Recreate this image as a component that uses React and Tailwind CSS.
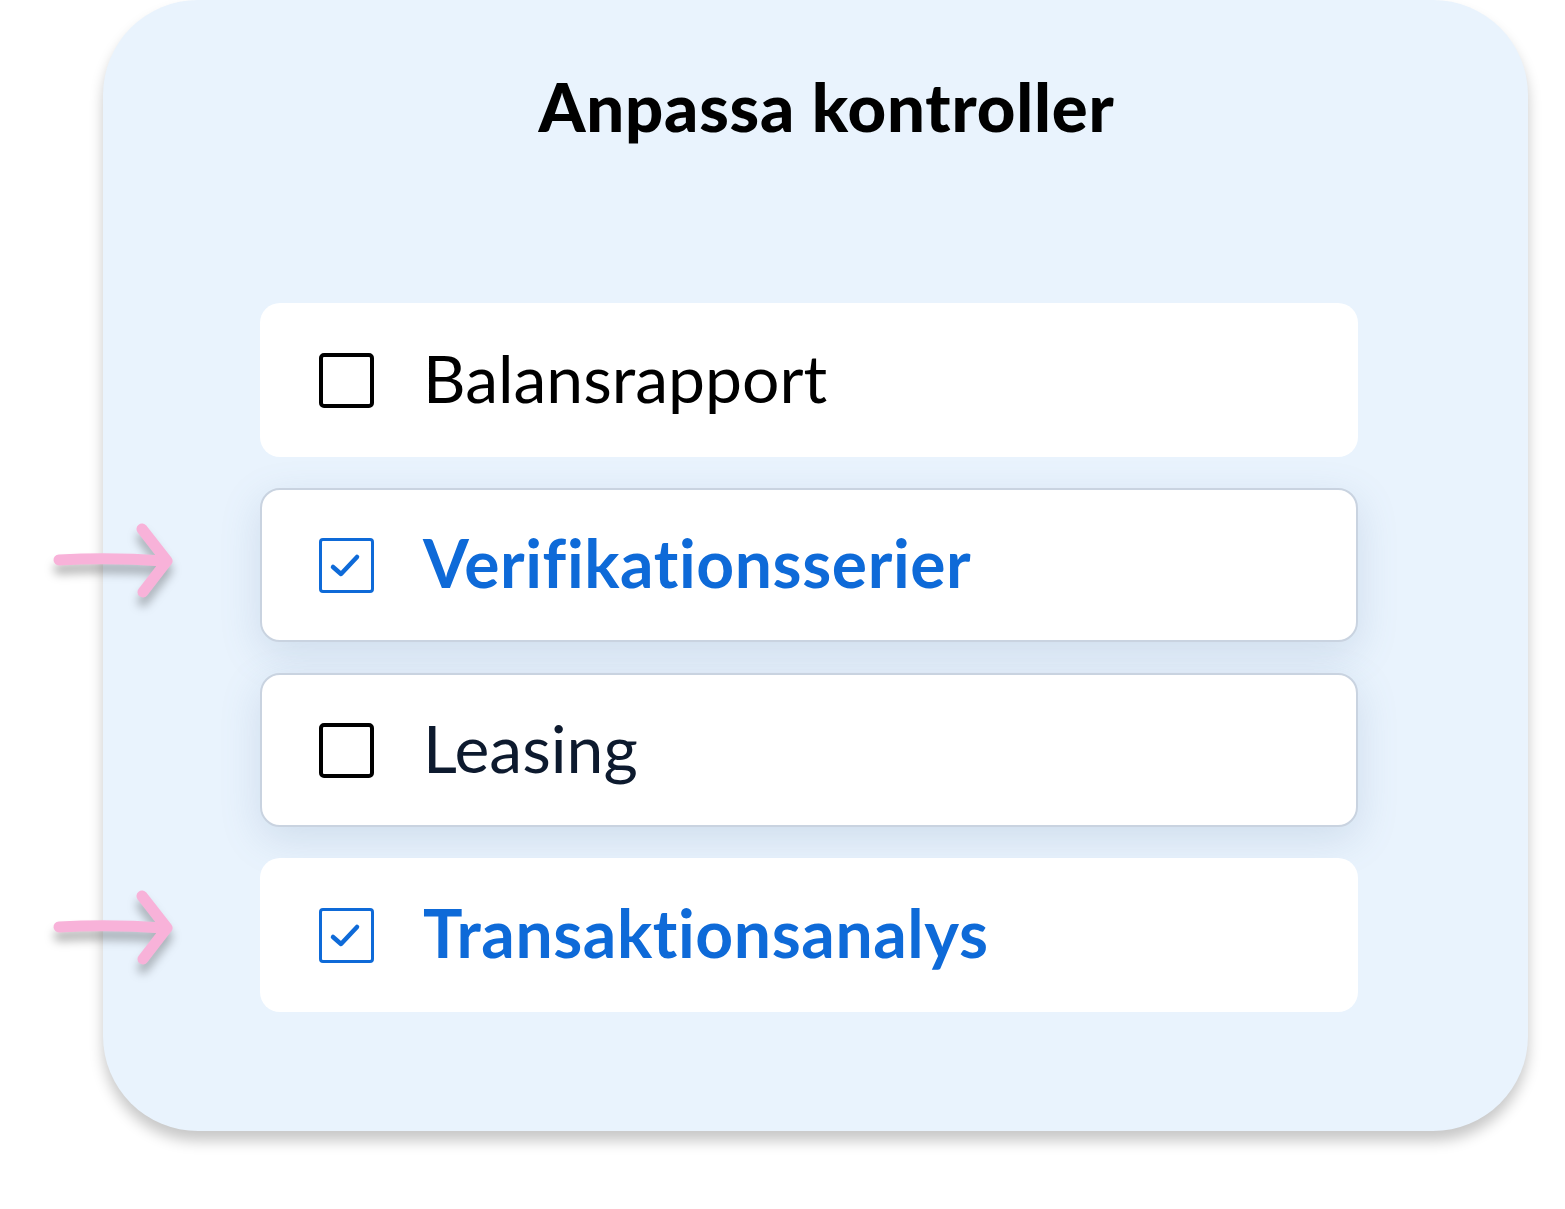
import React from "react";

const items = [
  { label: "Balansrapport", checked: false, outlined: false, tone: "text-black" },
  { label: "Verifikationsserier", checked: true, outlined: true, tone: "text-[#0e6ad8]" },
  { label: "Leasing", checked: false, outlined: true, tone: "text-[#0d1a2e]" },
  { label: "Transaktionsanalys", checked: true, outlined: false, tone: "text-[#0e6ad8]" },
];

const Box = ({ checked }) => {
  if (!checked) {
    return <div className="w-[55px] h-[55px] shrink-0 rounded-[5px] border-[4px] border-black bg-white" />;
  }
  return (
    <div className="w-[55px] h-[55px] shrink-0 rounded-[4px] border-[3px] border-[#0e6ad8] bg-white flex items-center justify-center">
      <svg width="49" height="49" viewBox="0 0 49 49" fill="none">
        <path d="M11 26 L19 33 L35 16" stroke="#0e6ad8" strokeWidth="4.5" strokeLinecap="round" strokeLinejoin="round" />
      </svg>
    </div>
  );
};

const Arrow = ({ className }) => (
  <svg
    className={"absolute drop-shadow-[0_9px_5px_rgba(0,0,0,0.28)] " + className}
    width="125"
    height="80"
    viewBox="0 0 125 80"
    fill="none"
  >
    <path d="M9 40 Q60 37 114 41" stroke="#f8b2d9" strokeWidth="11" strokeLinecap="round" />
    <path d="M92 9 L117 41 L93 72" stroke="#f8b2d9" strokeWidth="11" strokeLinecap="round" strokeLinejoin="round" />
  </svg>
);

const Row = ({ item }) => (
  <div
    className={
      "h-[154px] rounded-[20px] bg-white flex items-center gap-[49px] " +
      (item.outlined
        ? "pl-[57px] border-2 border-[#c9d3e0] shadow-[0_12px_40px_rgba(90,120,160,0.18)]"
        : "pl-[59px]")
    }
  >
    <Box checked={item.checked} />
    <span
      className={
        "text-[66px] leading-none pb-[4px] " +
        item.tone +
        (item.checked ? " font-bold tracking-[0.6px]" : " font-normal")
      }
    >
      {item.label}
    </span>
  </div>
);

export default function App() {
  return (
    <div className="relative w-full min-h-screen bg-white font-['Lato',sans-serif] pl-[103px]">
      <div className="w-[1425px] h-[1131px] rounded-[95px] bg-[#e9f3fd] shadow-[0_10px_14px_rgba(0,0,0,0.22)] flex flex-col">
        <h1 className="pt-[73px] pl-[22px] text-center text-[67px] leading-none font-black text-black tracking-[0.8px]">
          Anpassa kontroller
        </h1>
        <div className="mt-[163px] ml-[157px] w-[1098px] flex flex-col gap-[31px]">
          {items.map((item) => (
            <Row key={item.label} item={item} />
          ))}
        </div>
      </div>
      <Arrow className="left-[50px] top-[520px]" />
      <Arrow className="left-[50px] top-[887px]" />
    </div>
  );
}
